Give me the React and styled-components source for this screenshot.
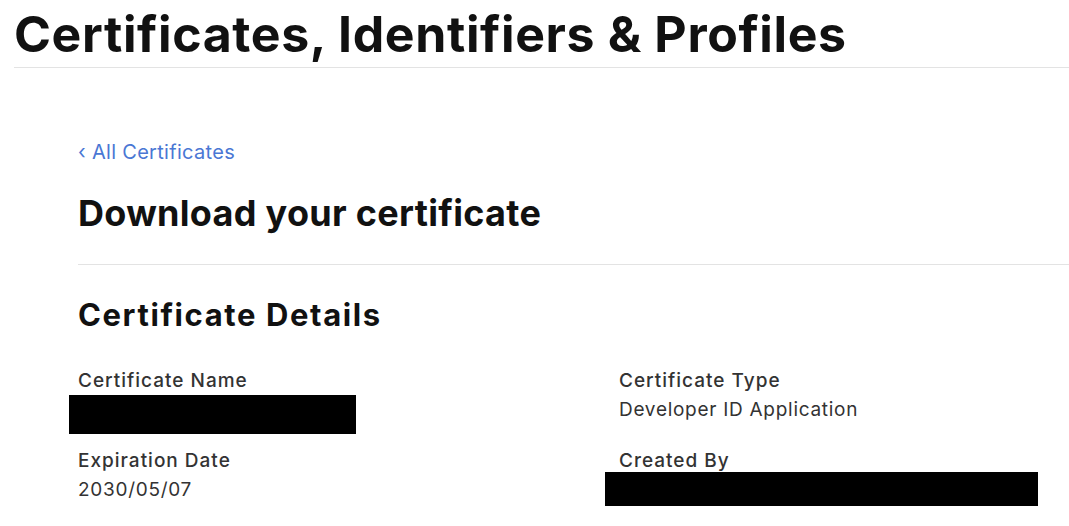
import React from 'react';
import styled, { createGlobalStyle } from 'styled-components';

const Global = createGlobalStyle`
  html, body {
    margin: 0;
    padding: 0;
    background: #ffffff;
    font-family: Inter, "Noto Sans", "Liberation Sans", sans-serif;
    color: #111111;
    overflow: hidden;
  }
`

const Page = styled.div`
  width: 1069px;
  height: 526px;
  overflow: hidden;
`

const Header = styled.div`
  margin-left: 14px;
  border-bottom: 1px solid #e3e3e3;
  height: 67px;
`

const PageTitle = styled.h1`
  margin: 0;
  padding-top: 4px;
  font-size: 50px;
  line-height: 60px;
  font-weight: 700;
  letter-spacing: 0.62px;
  color: #111111;
`

const Content = styled.div`
  padding: 72px 0 0 78px;
`

const BackLink = styled.a`
  display: inline-flex;
  align-items: center;
  font-size: 20px;
  line-height: 24px;
  letter-spacing: 0.3px;
  color: #4a77d4;
  text-decoration: none;
  cursor: pointer;
`

const Heading = styled.h2`
  margin: 0;
  padding: 28px 0 30px;
  font-size: 36px;
  line-height: 42px;
  font-weight: 700;
  letter-spacing: 0.3px;
  border-bottom: 1px solid #e3e3e3;
`

const SubHeading = styled.h3`
  margin: 0;
  padding: 30px 0 0;
  font-size: 31px;
  line-height: 40px;
  font-weight: 700;
  letter-spacing: 1.6px;
`

const Grid = styled.div`
  display: grid;
  grid-template-columns: 541px 1fr;
  padding-top: 31px;
  row-gap: 12px;
`

const Field = styled.div`
  display: flex;
  flex-direction: column;
`

const Label = styled.div`
  font-size: 19px;
  line-height: 29px;
  font-weight: 500;
  letter-spacing: 1px;
  color: #333333;
`

const Value = styled.div`
  font-size: 19px;
  line-height: 29px;
  letter-spacing: 0.72px;
  color: #333333;
`

const Redacted = styled.div`
  width: ${({ w }) => w}px;
  height: ${({ h }) => h}px;
  margin-left: ${({ shift }) => shift}px;
  margin-top: ${({ top }) => top || 0}px;
  background: #000000;
`

export default function App() {
  return (
    <Page>
      <Global />
      <Header>
        <PageTitle>Certificates, Identifiers &amp; Profiles</PageTitle>
      </Header>
      <Content>
        <BackLink>‹ All Certificates</BackLink>
        <Heading>Download your certificate</Heading>
        <SubHeading>Certificate Details</SubHeading>
        <Grid>
          <Field>
            <Label>Certificate Name</Label>
            <Redacted w={287} h={39} shift={-9} />
          </Field>
          <Field>
            <Label>Certificate Type</Label>
            <Value>Developer ID Application</Value>
          </Field>
          <Field>
            <Label>Expiration Date</Label>
            <Value>2030/05/07</Value>
          </Field>
          <Field>
            <Label>Created By</Label>
            <Redacted w={433} h={34} shift={-14} top={-3} />
          </Field>
        </Grid>
      </Content>
    </Page>
  );
}
